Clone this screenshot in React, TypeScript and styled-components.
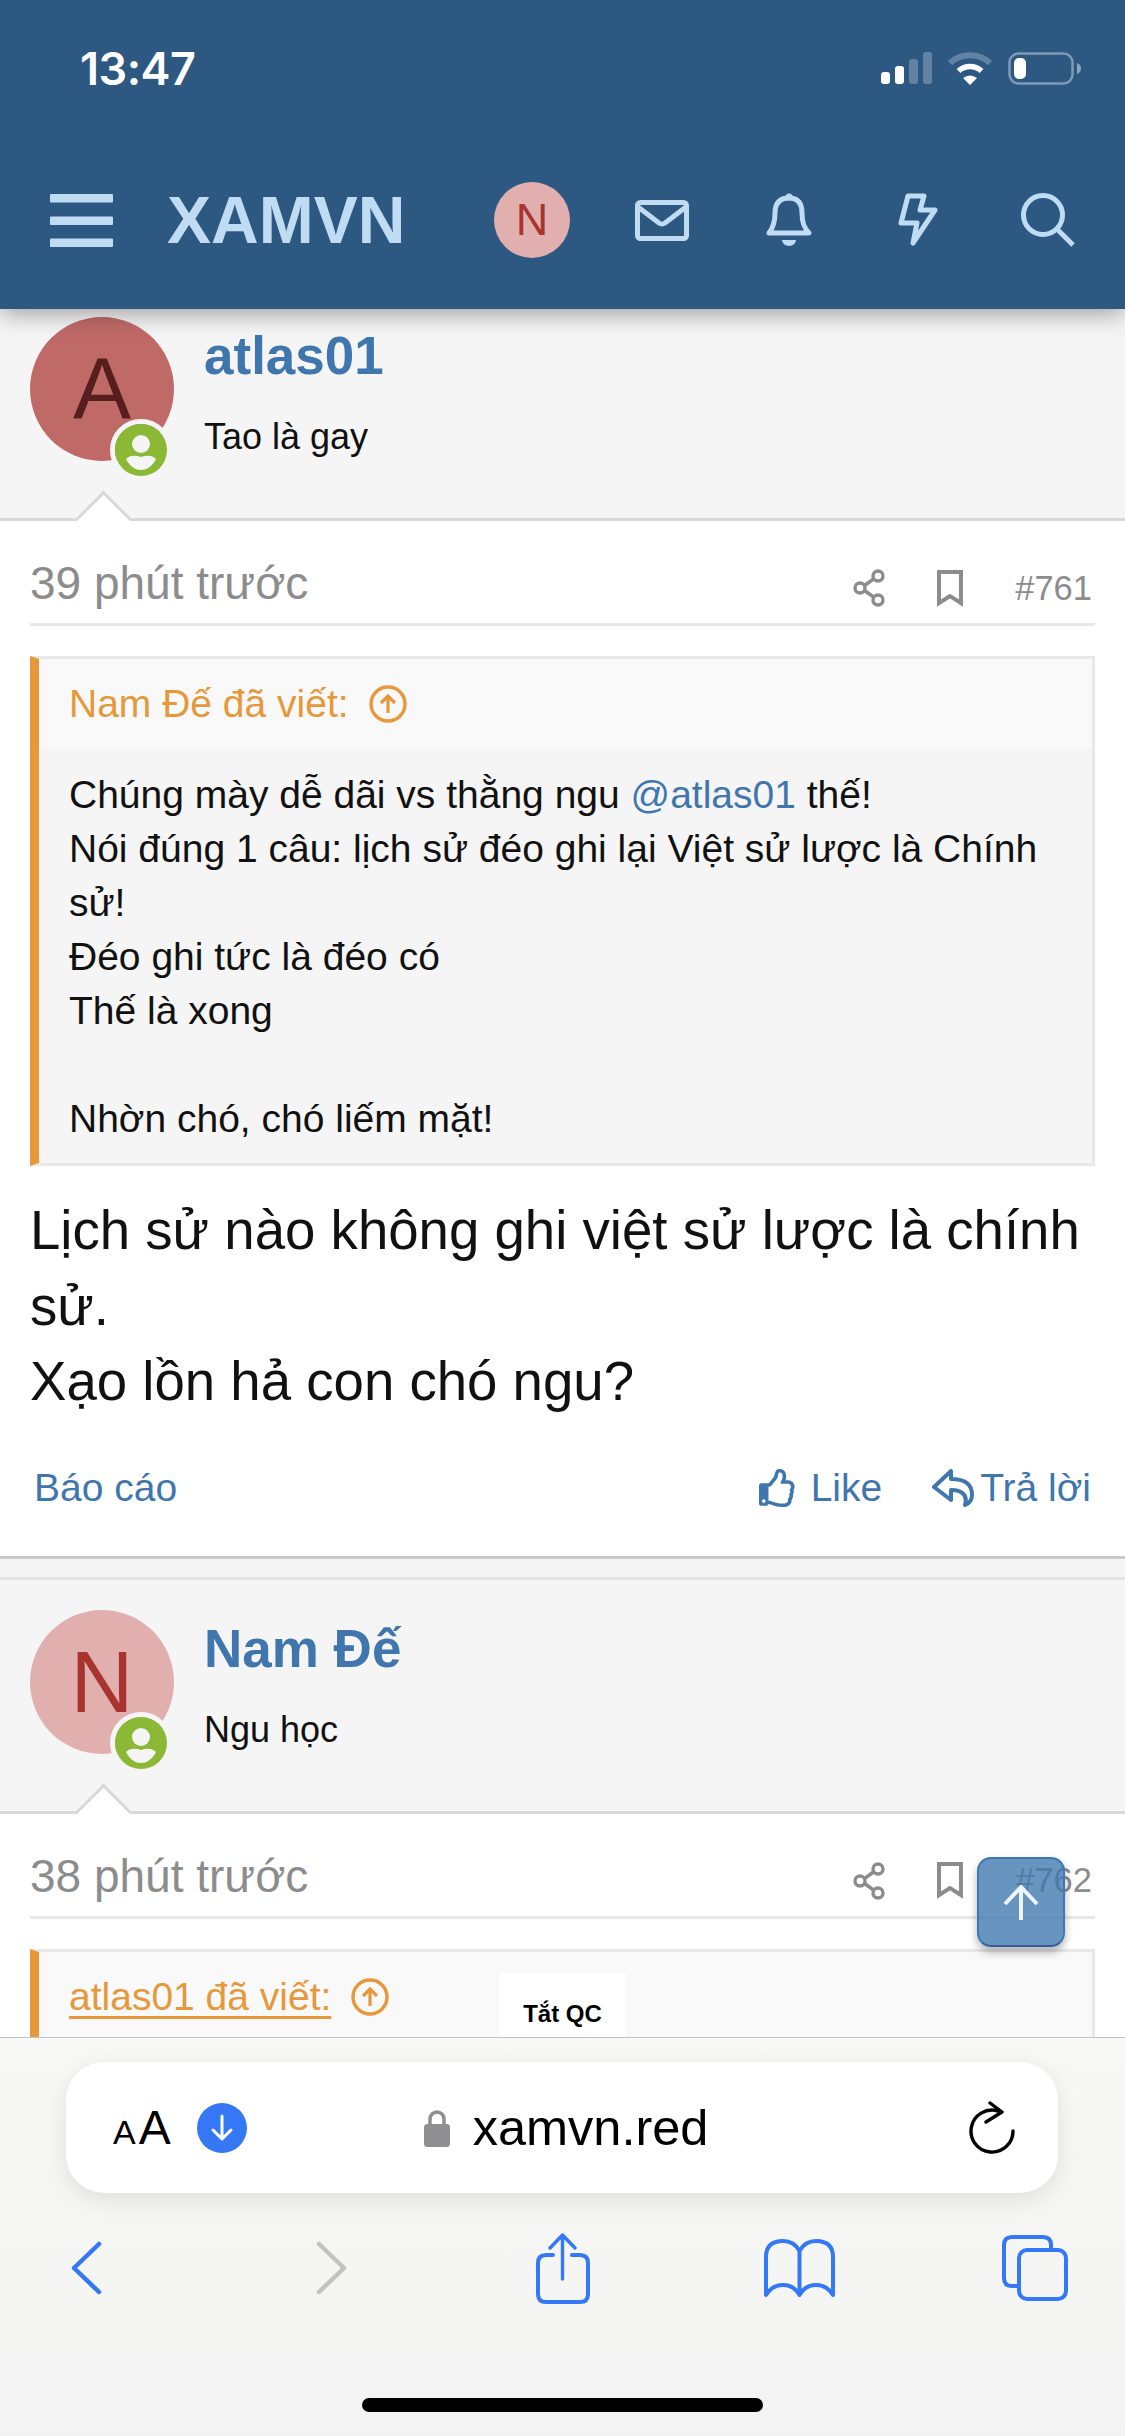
import React from 'react';
import styled, { createGlobalStyle } from 'styled-components';
import { FaRegThumbsUp } from 'react-icons/fa';

const HEADER_ICON = '#c0dcf3';
const LINK = '#3f76ae';
const GRAY = '#8c8c8c';
const ORANGE = '#e6983b';
const IOS_BLUE = '#3478f6';

const GlobalStyle = createGlobalStyle`
  html, body {
    margin: 0;
    padding: 0;
    background: #f5f5f5;
  }
  * {
    box-sizing: border-box;
  }
`;

interface UserProps {
  letter: string;
  bg: string;
  fg: string;
  name: string;
  title: string;
  top: number;
  hasTopLine?: boolean;
}

function User({ letter, bg, fg, name, title, top, hasTopLine }: UserProps) {
  return (
    <S.UserBar $top={top} $hasTopLine={hasTopLine}>
      <S.Avatar $bg={bg} $fg={fg}>
        {letter}
        <S.Online>
          <svg width="52" height="52" viewBox="0 0 52 52">
            <circle cx="26" cy="26" r="26" fill="#8bb935" />
            <circle cx="26" cy="20" r="9" fill="#f5f5f5" />
            <path
              d="M11 35C15 31 20 31 26 33C32 31 37 31 41 35C37 43 31 46 26 46C21 46 15 43 11 35Z"
              fill="#f5f5f5"
            />
          </svg>
        </S.Online>
      </S.Avatar>
      <S.UserText>
        <S.UserName>{name}</S.UserName>
        <S.UserTitle>{title}</S.UserTitle>
      </S.UserText>
    </S.UserBar>
  );
}

function Meta({ time, num }: { time: string; num: string }) {
  return (
    <S.Meta>
      <S.Time>{time}</S.Time>
      <S.MetaRight>
        <svg width="34" height="38" viewBox="0 0 34 38" fill="none" stroke={GRAY} strokeWidth="3.4">
          <circle cx="26" cy="7" r="5" />
          <circle cx="8" cy="19" r="5" />
          <circle cx="26" cy="31" r="5" />
          <path d="M12.5 16.5L21.5 10M12.5 21.5L21.5 28" />
        </svg>
        <S.BookmarkIcon width="26" height="37" viewBox="0 0 26 37" fill="none" stroke={GRAY} strokeWidth="4">
          <path d="M2 2H24V33L13 26L2 33Z" />
        </S.BookmarkIcon>
        <S.PostNum>{num}</S.PostNum>
      </S.MetaRight>
    </S.Meta>
  );
}

function UpCircle() {
  return (
    <svg width="38" height="38" viewBox="0 0 38 38" fill="none" stroke={ORANGE} strokeWidth="3.4">
      <circle cx="19" cy="19" r="17" />
      <path d="M19 28V11M12 18L19 11L26 18" strokeWidth="3.2" />
    </svg>
  );
}

function App() {
  return (
    <S.Page>
      <GlobalStyle />
      <S.Header>
        <S.StatusBar>
          <S.Clock>13:47</S.Clock>
          <S.StatusIcons>
            <svg width="52" height="33" viewBox="0 0 52 33" fill="#fff">
              <rect x="1" y="20" width="9" height="12" rx="3" />
              <rect x="15" y="14" width="9" height="18" rx="3" />
              <rect x="29" y="7" width="9" height="25" rx="3" opacity="0.25" />
              <rect x="43" y="0" width="9" height="32" rx="3" opacity="0.25" />
            </svg>
            <S.WifiIcon width="46" height="33" viewBox="0 0 46 33" fill="none">
              <path d="M3 11A30 30 0 0 1 43 11" stroke="#fff" strokeWidth="6" opacity="0.25" />
              <path d="M11.5 19A17 17 0 0 1 34.5 19" stroke="#fff" strokeWidth="5.5" />
              <path d="M23 33L16 26Q23 21 30 26Z" fill="#fff" />
            </S.WifiIcon>
            <S.BatteryIcon width="74" height="33" viewBox="0 0 74 33" fill="none">
              <rect x="1.5" y="1.5" width="63" height="30" rx="9" stroke="#fff" strokeWidth="2.5" opacity="0.4" />
              <rect x="6" y="6" width="12" height="21" rx="5" fill="#fff" />
              <path d="M69 11C72 12 73 14 73 16.5C73 19 72 21 69 22Z" fill="#fff" opacity="0.45" />
            </S.BatteryIcon>
          </S.StatusIcons>
        </S.StatusBar>
        <S.NavRow>
          <svg width="63" height="53" viewBox="0 0 63 53" fill={HEADER_ICON}>
            <rect width="63" height="8.5" rx="1" />
            <rect y="22.5" width="63" height="8.5" rx="1" />
            <rect y="44.5" width="63" height="8.5" rx="1" />
          </svg>
          <S.Logo>XAMVN</S.Logo>
          <S.NavIcons>
            <S.NavAvatar>N</S.NavAvatar>
            <S.NavIcon $ml={65} width="54" height="41" viewBox="0 0 54 41" fill="none" stroke={HEADER_ICON} strokeWidth="5">
              <rect x="2.5" y="2.5" width="49" height="36" rx="3" strokeLinejoin="round" />
              <path d="M3 7L24 23Q27 25 30 23L51 7" />
            </S.NavIcon>
            <S.NavIcon $ml={76} width="48" height="54" viewBox="0 0 48 54" fill="none" stroke={HEADER_ICON} strokeWidth="5" strokeLinejoin="round">
              <path d="M4 40C8 35 10 30 10 20C10 10 15 5 24 5C33 5 37 10 37 20C37 30 39 35 44 40Z" />
              <circle cx="24" cy="4" r="3.5" fill={HEADER_ICON} stroke="none" />
              <path d="M17 47H31A7 6 0 0 1 17 47Z" fill={HEADER_ICON} stroke="none" />
            </S.NavIcon>
            <S.NavIcon $ml={85} width="41" height="54" viewBox="0 0 41 54" fill="none" stroke={HEADER_ICON} strokeWidth="5" strokeLinejoin="round">
              <path d="M10 3H26L22 17H37L15 50L19 30H3Z" />
            </S.NavIcon>
            <S.NavIcon $ml={82} width="54" height="54" viewBox="0 0 54 54" fill="none" stroke={HEADER_ICON} strokeWidth="5">
              <circle cx="22" cy="22" r="19.5" />
              <path d="M36 36L52 52" />
            </S.NavIcon>
          </S.NavIcons>
        </S.NavRow>
      </S.Header>

      <User letter="A" bg="#c06a68" fg="#561f1e" name="atlas01" title="Tao là gay" top={8} />
      <S.Post>
        <Meta time="39 phút trước" num="#761" />
        <S.Quote>
          <S.QuoteHead>
            <span>Nam Đế đã viết:</span>
            <UpCircle />
          </S.QuoteHead>
          <S.QuoteBody>
            Chúng mày dễ dãi vs thằng ngu <S.Mention>@atlas01</S.Mention> thế!
            <br />
            Nói đúng 1 câu: lịch sử đéo ghi lại Việt sử lược là Chính sử!
            <br />
            Đéo ghi tức là đéo có
            <br />
            Thế là xong
            <br />
            <br />
            Nhờn chó, chó liếm mặt!
          </S.QuoteBody>
        </S.Quote>
        <S.Message>
          Lịch sử nào không ghi việt sử lược là chính sử.
          <br />
          Xạo lồn hả con chó ngu?
        </S.Message>
        <S.Actions>
          <S.ActionLink>Báo cáo</S.ActionLink>
          <S.ActionsRight>
            <S.ActionLink $gap={14}>
              <FaRegThumbsUp size={38} />
              Like
            </S.ActionLink>
            <S.ActionLink $gap={6}>
              <svg width="42" height="38" viewBox="0 0 42 38" fill="none" stroke={LINK} strokeWidth="4" strokeLinejoin="round">
                <path d="M2 18L19 2V10C32 10 40 14 40 26C40 30 38 34 33 36C36 26 30 21 19 21V31Z" />
              </svg>
              Trả lời
            </S.ActionLink>
          </S.ActionsRight>
        </S.Actions>
      </S.Post>

      <User letter="N" bg="#e1afae" fg="#a83430" name="Nam Đế" title="Ngu học" top={30} hasTopLine />
      <S.Post>
        <Meta time="38 phút trước" num="#762" />
        <S.Quote>
          <S.QuoteHead>
            <S.UnderlinedName>atlas01 đã viết:</S.UnderlinedName>
            <UpCircle />
            <S.AdToggle>Tắt QC</S.AdToggle>
          </S.QuoteHead>
        </S.Quote>
      </S.Post>

      <S.ScrollTop>
        <svg width="36" height="36" viewBox="0 0 36 36" fill="none" stroke="#eef4fb" strokeWidth="4">
          <path d="M18 35V2M2 19L18 2L34 19" />
        </svg>
      </S.ScrollTop>

      <S.BrowserBar>
        <S.UrlPill>
          <S.FontSize>
            <S.SmallA>A</S.SmallA>
            <S.BigA>A</S.BigA>
          </S.FontSize>
          <S.DownloadDot>
            <svg width="24" height="30" viewBox="0 0 24 30" fill="none" stroke="#fff" strokeWidth="3" strokeLinecap="round" strokeLinejoin="round">
              <path d="M12 3V26M3 17L12 26L21 17" />
            </svg>
          </S.DownloadDot>
          <S.LockIcon width="26" height="38" viewBox="0 0 26 38">
            <path d="M6 17V10A7 7 0 0 1 20 10V17" fill="none" stroke="#8e8e93" strokeWidth="3.5" />
            <rect y="15" width="26" height="23" rx="3.5" fill="#8e8e93" />
          </S.LockIcon>
          <S.Domain>xamvn.red</S.Domain>
          <S.RefreshIcon width="46" height="54" viewBox="0 0 46 54" fill="none" stroke="#000" strokeWidth="3.4" strokeLinecap="round" strokeLinejoin="round">
            <path d="M29 10A21 21 0 1 0 44 30" />
            <path d="M21 2L33 11L17 21" />
          </S.RefreshIcon>
        </S.UrlPill>
        <S.ToolRow>
          <svg width="31" height="54" viewBox="0 0 31 54" fill="none" stroke={IOS_BLUE} strokeWidth="4.5" strokeLinecap="round" strokeLinejoin="round">
            <path d="M28 3L3 27L28 51" />
          </svg>
          <S.ToolIcon $ml={214} width="31" height="54" viewBox="0 0 31 54" fill="none" stroke="#c2c2c2" strokeWidth="4.5" strokeLinecap="round" strokeLinejoin="round">
            <path d="M3 3L28 27L3 51" />
          </S.ToolIcon>
          <S.ToolIcon $ml={189} width="54" height="71" viewBox="0 0 54 71" fill="none" stroke={IOS_BLUE} strokeWidth="4" strokeLinecap="round" strokeLinejoin="round">
            <path d="M26.5 46V2M14 15L26.5 2L39 15" strokeWidth="3.4" />
            <path d="M17 22H10Q2 22 2 30V61Q2 69 10 69H44Q52 69 52 61V30Q52 22 44 22H36" />
          </S.ToolIcon>
          <S.ToolIcon $ml={174} width="71" height="59" viewBox="0 0 71 59" fill="none" stroke={IOS_BLUE} strokeWidth="4" strokeLinejoin="round">
            <path d="M35.5 12Q30 2 19 2Q2 2 2 18V56Q8 46 19 46Q30 46 35.5 56Q41 46 52 46Q63 46 69 56V18Q69 2 52 2Q41 2 35.5 12V56" />
          </S.ToolIcon>
          <S.ToolIcon $ml={167} width="66" height="66" viewBox="0 0 66 66" fill="none" stroke={IOS_BLUE} strokeWidth="4" strokeLinejoin="round">
            <path d="M49 15V10Q49 2 41 2H10Q2 2 2 10V43Q2 51 10 51H17" />
            <rect x="17" y="15" width="47" height="49" rx="8" />
          </S.ToolIcon>
        </S.ToolRow>
        <S.HomeIndicator />
      </S.BrowserBar>
    </S.Page>
  );
}

const S = {
  Page: styled.div`
    position: relative;
    width: 1125px;
    height: 2436px;
    overflow: hidden;
    background: #f5f5f5;
    color: #111;
    font-family: 'Liberation Sans', Arial, sans-serif;
  `,
  Header: styled.header`
    position: relative;
    z-index: 2;
    height: 309px;
    background: #2d5882;
    box-shadow: 0 5px 22px rgba(0, 0, 0, 0.35);
  `,
  StatusBar: styled.div`
    display: flex;
    justify-content: space-between;
    align-items: center;
    height: 137px;
    padding: 0 43px 0 80px;
  `,
  Clock: styled.div`
    font-family: Inter, 'Liberation Sans', sans-serif;
    font-size: 45px;
    font-weight: 600;
    letter-spacing: -0.5px;
    color: #fff;
  `,
  StatusIcons: styled.div`
    display: flex;
    align-items: center;
  `,
  WifiIcon: styled.svg`
    margin-left: 15px;
  `,
  BatteryIcon: styled.svg`
    margin-left: 15px;
  `,
  NavRow: styled.div`
    display: flex;
    align-items: center;
    height: 170px;
    padding: 0 50px 0 50px;
    margin-top: -2px;
  `,
  Logo: styled.div`
    margin-left: 54px;
    font-size: 66px;
    font-weight: 700;
    color: ${HEADER_ICON};
  `,
  NavIcons: styled.div`
    display: flex;
    align-items: center;
    margin-left: auto;
  `,
  NavAvatar: styled.div`
    display: flex;
    justify-content: center;
    align-items: center;
    width: 76px;
    height: 76px;
    border-radius: 50%;
    background: #e1afae;
    color: #a83430;
    font-size: 45px;
  `,
  NavIcon: styled.svg<{ $ml: number }>`
    margin-left: ${props => props.$ml}px;
  `,
  UserBar: styled.div<{ $top: number; $hasTopLine?: boolean }>`
    position: relative;
    display: flex;
    height: ${props => (props.$hasTopLine ? 237 : 212)}px;
    padding: ${props => props.$top}px 30px 0;
    background: #f5f5f5;
    border-bottom: 3px solid #d8d8d8;
    ${props =>
      props.$hasTopLine &&
      `
      margin-top: 18px;
      border-top: 3px solid #e2e2e2;
    `}

    &::after {
      content: '';
      position: absolute;
      left: 83px;
      bottom: -22px;
      width: 38px;
      height: 38px;
      background: #fff;
      border-top: 3px solid #d8d8d8;
      border-left: 3px solid #d8d8d8;
      transform: rotate(45deg);
    }
  `,
  Avatar: styled.div<{ $bg: string; $fg: string }>`
    position: relative;
    display: flex;
    flex: none;
    justify-content: center;
    align-items: center;
    width: 144px;
    height: 144px;
    border-radius: 50%;
    background: ${props => props.$bg};
    color: ${props => props.$fg};
    font-size: 87px;
  `,
  Online: styled.div`
    position: absolute;
    left: 80px;
    top: 102px;
    display: flex;
    width: 62px;
    height: 62px;
    border: 5px solid #f5f5f5;
    border-radius: 50%;
  `,
  UserText: styled.div`
    margin-left: 30px;
  `,
  UserName: styled.div`
    margin-top: 4px;
    font-size: 53px;
    line-height: 70px;
    font-weight: 700;
    color: ${LINK};
  `,
  UserTitle: styled.div`
    margin-top: 24px;
    font-size: 36px;
    line-height: 44px;
    color: #111;
  `,
  Post: styled.article`
    background: #fff;
    border-bottom: 3px solid #c9c9c9;
  `,
  Meta: styled.div`
    display: flex;
    justify-content: space-between;
    align-items: flex-start;
    height: 105px;
    margin: 0 30px;
    padding: 38px 3px 0 0;
    border-bottom: 3px solid #e8e8e8;
  `,
  Time: styled.div`
    font-size: 46px;
    line-height: 48px;
    color: ${GRAY};
  `,
  MetaRight: styled.div`
    display: flex;
    align-items: center;
    height: 58px;
  `,
  BookmarkIcon: styled.svg`
    margin-left: 51px;
  `,
  PostNum: styled.div`
    margin-left: 52px;
    font-size: 34.5px;
    color: ${GRAY};
  `,
  Quote: styled.div`
    margin: 30px 30px 0;
    border: 3px solid #e8e8e8;
    border-left: 9px solid ${ORANGE};
    background: #f5f5f5;
  `,
  QuoteHead: styled.div`
    position: relative;
    display: flex;
    align-items: center;
    gap: 20px;
    height: 90px;
    padding-left: 30px;
    background: #f9f9f9;
    color: ${ORANGE};
    font-size: 39px;
  `,
  UnderlinedName: styled.span`
    text-decoration: underline;
    text-underline-offset: 6px;
    text-decoration-thickness: 3px;
  `,
  AdToggle: styled.div`
    position: absolute;
    left: 460px;
    top: 21px;
    width: 127px;
    height: 110px;
    padding-top: 27px;
    background: #fff;
    color: #000;
    font-size: 24px;
    font-weight: 700;
    text-align: center;
  `,
  QuoteBody: styled.div`
    padding: 19px 30px 17px;
    font-size: 39px;
    line-height: 54px;
    color: #111;
  `,
  Mention: styled.span`
    color: ${LINK};
  `,
  Message: styled.div`
    margin: 27px 30px 0;
    font-size: 54.6px;
    line-height: 75.6px;
    color: #111;
  `,
  Actions: styled.div`
    display: flex;
    justify-content: space-between;
    align-items: center;
    margin-top: 46px;
    padding: 0 34px 46px;
  `,
  ActionsRight: styled.div`
    display: flex;
    gap: 50px;
  `,
  ActionLink: styled.div<{ $gap?: number }>`
    display: flex;
    align-items: center;
    gap: ${props => props.$gap ?? 0}px;
    font-size: 39px;
    line-height: 44px;
    color: ${LINK};

    svg {
      flex: none;
    }
  `,
  ScrollTop: styled.div`
    position: absolute;
    z-index: 3;
    left: 977px;
    top: 1857px;
    display: flex;
    justify-content: center;
    padding-top: 26px;
    width: 88px;
    height: 90px;
    border: 2px solid #3b78b5;
    border-bottom-color: #2f5f96;
    border-radius: 14px;
    background: rgba(62, 118, 174, 0.78);
    box-shadow: 0 5px 8px rgba(0, 0, 0, 0.3);
  `,
  BrowserBar: styled.div`
    position: absolute;
    z-index: 4;
    left: 0;
    right: 0;
    bottom: 0;
    height: 399px;
    padding-top: 24px;
    border-top: 1px solid #c4c4c4;
    background: linear-gradient(#f8f8f6, #f3f3f3);
  `,
  UrlPill: styled.div`
    display: flex;
    align-items: center;
    height: 131px;
    margin: 0 67px 0 66px;
    padding: 0 43px 0 47px;
    border-radius: 38px;
    background: #fff;
    box-shadow: 0 6px 24px rgba(0, 0, 0, 0.1);
  `,
  FontSize: styled.div`
    display: flex;
    align-items: baseline;
    gap: 3px;
    color: #000;
    line-height: 1;
  `,
  SmallA: styled.span`
    font-size: 34px;
  `,
  BigA: styled.span`
    font-size: 48px;
  `,
  DownloadDot: styled.div`
    display: flex;
    justify-content: center;
    align-items: center;
    width: 50px;
    height: 50px;
    margin-left: 26px;
    border-radius: 50%;
    background: ${IOS_BLUE};
  `,
  LockIcon: styled.svg`
    margin-left: 177px;
  `,
  Domain: styled.div`
    margin-left: 23px;
    font-size: 50.5px;
    color: #000;
  `,
  RefreshIcon: styled.svg`
    margin-left: auto;
  `,
  ToolRow: styled.div`
    display: flex;
    align-items: center;
    height: 110px;
    margin-top: 20px;
    padding-left: 71px;
  `,
  ToolIcon: styled.svg<{ $ml: number }>`
    margin-left: ${props => props.$ml}px;
  `,
  HomeIndicator: styled.div`
    width: 401px;
    height: 14px;
    margin: 75px auto 0;
    border-radius: 7px;
    background: #000;
  `,
};

export default App;
